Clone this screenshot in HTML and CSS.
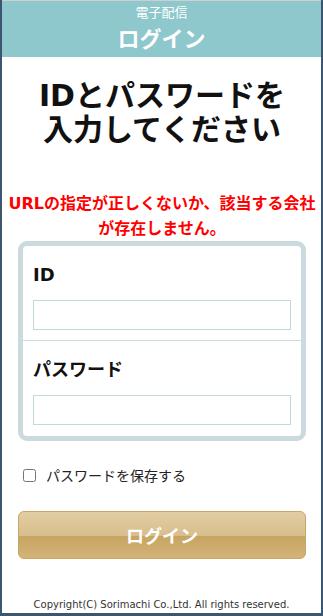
FILE: index.html
```html
<!DOCTYPE html>
<html lang="ja">
<head>
<meta charset="utf-8">
<title>ログイン</title>
<link rel="stylesheet" href="styles.css">
</head>
<body>
<div class="page">
  <header class="header">
    <div class="header-sub">電子配信</div>
    <div class="header-title">ログイン</div>
  </header>
  <main class="main">
    <h1 class="heading">IDとパスワードを<br>入力してください</h1>
    <p class="error">URLの指定が正しくないか、該当する会社が存在しません。</p>
    <div class="form-box">
      <div class="field field-first">
        <label class="field-label" for="uid">ID</label>
        <input class="field-input" id="uid" type="text">
      </div>
      <div class="field">
        <label class="field-label" for="pwd">パスワード</label>
        <input class="field-input" id="pwd" type="password">
      </div>
    </div>
    <label class="remember">
      <input class="remember-box" type="checkbox">
      <span class="remember-text">パスワードを保存する</span>
    </label>
    <button class="login-btn" type="button">ログイン</button>
  </main>
  <footer class="footer">Copyright(C) Sorimachi Co.,Ltd. All rights reserved.</footer>
</div>
</body>
</html>
```
FILE: styles.css
```css
html, body {
  margin: 0;
  padding: 0;
}
body {
  background: #3d566f;
  font-family: "DejaVu Sans", "Noto Sans CJK JP", sans-serif;
  color: #111;
}
.page {
  margin: 0 2px;
  border-top: 1px solid #cfcfcf;
  background: #fff;
  height: 612px;
  display: flex;
  flex-direction: column;
}
.header {
  background: #8ec8cc;
  height: 56px;
  color: #fff;
  text-align: center;
  font-family: "Noto Sans CJK JP", sans-serif;
}
.header-sub {
  font-size: 13px;
  line-height: 18px;
  padding-top: 2px;
}
.header-title {
  font-size: 22px;
  font-weight: bold;
  line-height: 32px;
}
.main {
  flex: 1;
  padding: 0 15px 0 16px;
  display: flex;
  flex-direction: column;
}
.heading {
  margin: 22px -10px 0;
  font-size: 30px;
  line-height: 34px;
  font-weight: bold;
  text-align: center;
  color: #111;
}
.error {
  margin: 44px -10px 0;
  color: #ff0000;
  font-size: 16px;
  font-weight: bold;
  line-height: 25px;
  text-align: center;
}
.form-box {
  margin-top: 0;
  border: 5px solid #cadadf;
  border-radius: 9px;
  background: #fff;
}
.field {
  padding: 19px 10px 11px;
  display: flex;
  flex-direction: column;
}
.field-first {
  padding-bottom: 10px;
  border-bottom: 1px solid #c9dcdf;
}
.field-label {
  font-size: 18px;
  font-weight: bold;
  line-height: 20px;
  height: 20px;
}
.field-input {
  margin: 15px 0 0;
  height: 30px;
  box-sizing: border-box;
  border: 1px solid #c4d8dc;
  padding: 0 4px;
  font-size: 14px;
  outline: none;
}
.remember {
  margin-top: 27px;
  display: flex;
  align-items: center;
  font-family: "Noto Sans CJK JP", sans-serif;
  font-size: 14px;
  color: #222;
  height: 14px;
}
.remember-box {
  width: 13px;
  height: 13px;
  margin: 0 0 0 5px;
}
.remember-text {
  margin-left: 10px;
}
.login-btn {
  margin-top: 29px;
  height: 48px;
  width: 100%;
  border: 1px solid #c9a661;
  border-radius: 6px;
  background: linear-gradient(to bottom, #e2cda3 0%, #d8be8d 52%, #c7a460 53%, #d3b47a 100%);
  color: #fff;
  font-family: "Noto Sans CJK JP", sans-serif;
  font-size: 18px;
  font-weight: bold;
  cursor: pointer;
}
.footer {
  text-align: center;
  font-family: "DejaVu Sans", sans-serif;
  font-size: 10px;
  color: #333;
  padding-bottom: 3px;
}
```
